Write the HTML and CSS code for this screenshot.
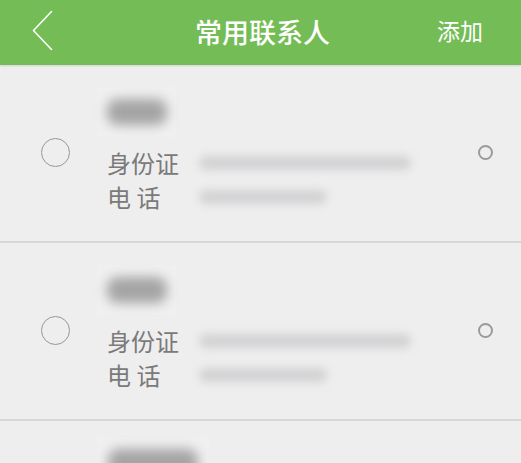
FILE: index.html
```html
<!DOCTYPE html>
<html lang="zh-CN">
<head>
<meta charset="utf-8">
<title>常用联系人</title>
<link rel="stylesheet" href="styles.css">
</head>
<body>
<header class="topbar">
  <div class="back">
    <svg width="22" height="42" viewBox="0 0 22 42"><polyline points="19.5,1.5 1.5,20.5 19.5,39.5" fill="none" stroke="#fff" stroke-width="1.6" stroke-linecap="round" stroke-linejoin="round"/></svg>
  </div>
  <h1 class="title">常用联系人</h1>
  <div class="add">添加</div>
</header>
<main class="list">
  <section class="row">
    <span class="radio"></span>
    <div class="info">
      <div class="name"><span class="name-blob"></span></div>
      <div class="fields">
        <span class="label">身份证</span><span class="value"><span class="value-blob long"></span></span>
        <span class="label">电 话</span><span class="value"><span class="value-blob short"></span></span>
      </div>
    </div>
    <span class="dot"></span>
  </section>
  <section class="row">
    <span class="radio"></span>
    <div class="info">
      <div class="name"><span class="name-blob"></span></div>
      <div class="fields">
        <span class="label">身份证</span><span class="value"><span class="value-blob long"></span></span>
        <span class="label">电 话</span><span class="value"><span class="value-blob short"></span></span>
      </div>
    </div>
    <span class="dot"></span>
  </section>
  <section class="row partial">
    <div class="info">
      <div class="name wide"><span class="name-blob"></span></div>
    </div>
  </section>
</main>
</body>
</html>
```

FILE: styles.css
```css
html, body {
  margin: 0;
  padding: 0;
  overflow: hidden;
}
body {
  background: #eeeeee;
  font-family: "Noto Sans CJK SC", "Noto Sans", sans-serif;
  width: 521px;
  height: 463px;
}
.topbar {
  height: 65px;
  background: #74bc55;
  display: grid;
  grid-template-columns: 1fr auto 1fr;
  align-items: center;
  box-shadow: 0 1px 2px rgba(0, 0, 0, 0.12);
  position: relative;
  z-index: 1;
}
.back {
  padding-left: 32px;
  display: flex;
  align-items: center;
  height: 42px;
  margin-top: -4px;
}
.back svg { display: block; }
.title {
  margin: 0;
  color: #fff;
  font-size: 27px;
  font-weight: 500;
  line-height: 1;
  margin-top: -2px;
  padding-left: 4px;
}
.add {
  justify-self: end;
  color: #fff;
  font-size: 23px;
  line-height: 1;
  padding-right: 38px;
  margin-top: -4px;
}
.list { display: block; }
.row {
  display: flex;
  align-items: center;
  height: 176px;
  border-bottom: 2px solid #d7d7d7;
}
.row.partial {
  height: 40px;
  border-bottom: 0;
  padding-left: 0;
}
.row.partial .info { margin-left: 97px; padding-top: 16px; }
.radio {
  width: 27px;
  height: 27px;
  border: 1.5px solid #979797;
  border-radius: 50%;
  margin-left: 41px;
  flex: none;
  margin-top: -2px;
}
.info {
  display: flex;
  flex-direction: column;
  align-self: flex-start;
  padding-top: 22px;
  margin-left: 27px;
}
.name {
  width: 79px;
  height: 50px;
  background: #f0f0f0;
  display: flex;
  align-items: center;
  justify-content: center;
}
.name.wide { width: 112px; }
.name-blob {
  display: block;
  width: 60px;
  height: 26px;
  background: #a4a4a4;
  border-radius: 10px;
  filter: blur(6px);
}
.name.wide .name-blob { width: 90px; }
.fields {
  display: grid;
  grid-template-columns: 92px auto;
  margin-top: 9px;
  padding-left: 10px;
}
.label {
  font-size: 24px;
  line-height: 34px;
  color: #7a7a7a;
}
.value {
  display: flex;
  align-items: center;
  height: 34px;
}
.value-blob {
  display: block;
  height: 14px;
  background: #d2d2d4;
  border-radius: 7px;
  filter: blur(4px);
}
.value-blob.long { width: 212px; }
.value-blob.short { width: 128px; }
.dot {
  width: 11px;
  height: 11px;
  border: 2.2px solid #9b9b9b;
  border-radius: 50%;
  margin-left: auto;
  margin-right: 28px;
  flex: none;
  margin-top: -2px;
}
```
